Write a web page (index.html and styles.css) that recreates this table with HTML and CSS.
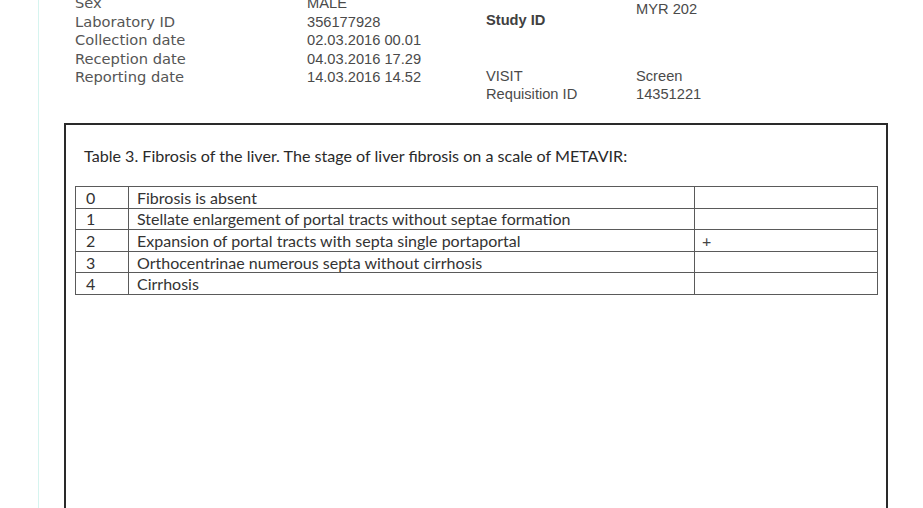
FILE: index.html
```html
<!DOCTYPE html>
<html lang="en">
<head>
<meta charset="utf-8">
<title>Laboratory report – Fibrosis</title>
<link rel="stylesheet" href="styles.css">
</head>
<body>
<div class="page">
  <header class="header">
    <div class="info-left">
      <span class="lbl">Sex</span><span class="val">MALE</span>
      <span class="lbl">Laboratory ID</span><span class="val">356177928</span>
      <span class="lbl">Collection date</span><span class="val">02.03.2016 00.01</span>
      <span class="lbl">Reception date</span><span class="val">04.03.2016 17.29</span>
      <span class="lbl">Reporting date</span><span class="val">14.03.2016 14.52</span>
    </div>
    <div class="info-right">
      <div class="study">
        <span class="lbl2 study-lbl">Study ID</span><span class="val">MYR 202</span>
      </div>
      <div class="visit">
        <span class="lbl2">VISIT</span><span class="val">Screen</span>
        <span class="lbl2">Requisition ID</span><span class="val">14351221</span>
      </div>
    </div>
  </header>
  <section class="box">
    <p class="caption">Table 3. Fibrosis of the liver. The stage of liver fibrosis on a scale of METAVIR:</p>
    <table class="metavir">
      <colgroup><col class="c-num"><col class="c-desc"><col class="c-mark"></colgroup>
      <tr><td>0</td><td class="desc">Fibrosis is absent</td><td></td></tr>
      <tr><td>1</td><td class="desc">Stellate enlargement of portal tracts without septae formation</td><td></td></tr>
      <tr><td>2</td><td class="desc">Expansion of portal tracts with septa single portaportal</td><td class="mark">+</td></tr>
      <tr><td>3</td><td class="desc">Orthocentrinae numerous septa without cirrhosis</td><td></td></tr>
      <tr><td>4</td><td class="desc">Cirrhosis</td><td></td></tr>
    </table>
  </section>
</div>
</body>
</html>
```
FILE: styles.css
```css
html, body {
  margin: 0;
  padding: 0;
  height: 100%;
  overflow: hidden;
  background: #fff;
}

.page {
  margin-left: 38px;
  border-left: 1px solid #d6f4ef;
  min-height: 100vh;
}

.header {
  display: flex;
  align-items: flex-start;
}

.info-left {
  margin-top: -6px;
  margin-left: 36px;
  width: 411px;
  display: grid;
  grid-template-columns: 232px 179px;
  line-height: 18.5px;
}

.lbl {
  font-family: "DejaVu Sans", sans-serif;
  font-size: 14.67px;
  color: #555;
}

.val {
  font-family: "Liberation Sans", Arial, sans-serif;
  font-size: 14.67px;
  color: #4a4a4a;
}

.info-right {
  display: flex;
  flex-direction: column;
  line-height: 18.5px;
}

.study, .visit {
  display: grid;
  grid-template-columns: 150px auto;
}

.lbl2 {
  font-family: "Liberation Sans", Arial, sans-serif;
  font-size: 14.67px;
  color: #4a4a4a;
}

.study-lbl {
  font-weight: bold;
  color: #404040;
  padding-top: 10.7px;
}

.visit {
  margin-top: 37.5px;
}

.box {
  margin-top: 19.3px;
  margin-left: 25px;
  width: 803px;
  height: 420px;
  border: 2px solid #2a2a2a;
  padding: 0 8px 0 9px;
}

.caption {
  margin: 21px 0 0 9px;
  font-family: Lato, "Open Sans", sans-serif;
  font-size: 16.1px;
  line-height: 20px;
  color: #2a2a2a;
}

.metavir {
  margin-top: 20px;
  width: 802px;
  border-collapse: collapse;
  table-layout: fixed;
  font-family: Lato, "Open Sans", sans-serif;
  font-size: 16px;
  color: #333;
}

.c-num { width: 53px; }
.c-desc { width: 566px; }
.c-mark { width: 183px; }

.metavir td {
  border: 1px solid #5a5a5a;
  height: 20.6px;
  padding: 0 8px 0 10px;
  line-height: 19px;
  vertical-align: middle;
  white-space: nowrap;
}

.metavir .desc {
  padding-left: 8px;
}

.metavir .mark {
  padding-left: 7px;
  color: #444;
}
```
